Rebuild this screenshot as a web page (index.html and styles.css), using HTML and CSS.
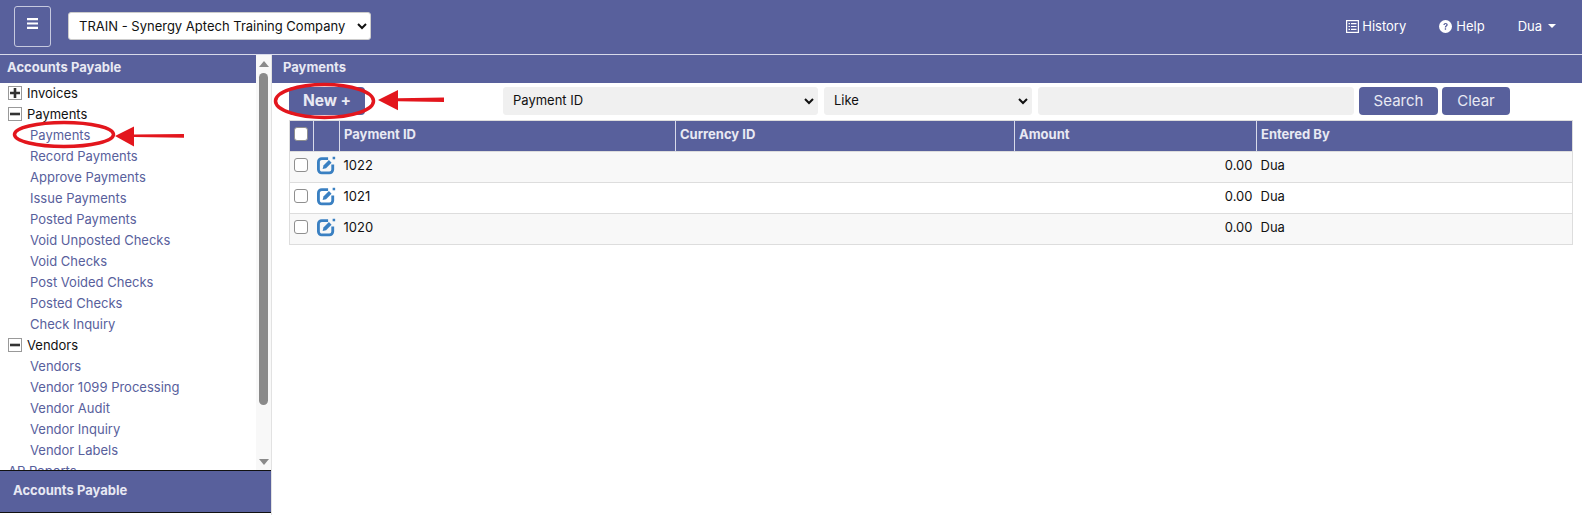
FILE: index.html
```html
<!DOCTYPE html>
<html lang="en">
<head>
<meta charset="utf-8">
<title>Payments</title>
<link rel="stylesheet" href="styles.css">
</head>
<body>
<svg class="defs" width="0" height="0" aria-hidden="true">
  <symbol id="edit-icon" viewBox="0 0 19 18">
    <path d="M11.500 2.400H5.500A3.200 3.200 0 0 0 2.300 5.600v7.200A3.200 3.200 0 0 0 5.500 16h7.200a3.200 3.200 0 0 0 3.200-3.200V8" fill="none" stroke="#3a80c2" stroke-width="2.700"/>
    <path d="M6.300 12.300l.8-3.300 5.200-5.200 2.500 2.500-5.200 5.200z" fill="#3a80c2"/>
    <path d="M15.800.7h2.400v2.400h-2.400z" fill="#3a80c2"/>
  </symbol>
</svg>
<div class="app">
  <header class="topbar">
    <button class="menu-btn" aria-label="Menu"><svg width="11" height="11" viewBox="0 0 11 11"><path d="M0 0h11v2.200H0zM0 4.400h11v2.200H0zM0 8.800h11V11H0z" fill="#fff"/></svg></button>
    <select class="company"><option>TRAIN - Synergy Aptech Training Company</option></select>
    <nav class="topnav">
      <a class="toplink"><svg width="13" height="13" viewBox="0 0 13 13"><rect x=".6" y=".6" width="11.800" height="11.800" fill="none" stroke="#fff" stroke-width="1.200"/><path d="M2.500 3h1.500v1.200H2.500zM5 3h5.500v1.200H5zM2.500 5.900h1.500v1.200H2.500zM5 5.900h5.500v1.200H5zM2.500 8.800h1.500V10H2.500zM5 8.800h5.500V10H5z" fill="#fff"/></svg>History</a>
      <a class="toplink help"><svg width="13" height="13" viewBox="0 0 13 13"><circle cx="6.500" cy="6.500" r="6.500" fill="#fff"/><path d="M4.400 5c0-1.300 1-2 2.200-2 1.200 0 2.100.7 2.100 1.800 0 1.600-1.600 1.400-1.600 2.700H5.800c0-2 1.600-1.900 1.600-2.700 0-.4-.3-.7-.8-.7-.5 0-.9.3-.9.9zM5.800 8.300h1.300v1.500H5.800z" fill="#58609c"/></svg>Help</a>
      <a class="toplink user">Dua<span class="caret"></span></a>
    </nav>
  </header>
  <div class="main">
    <aside class="sidebar">
      <div class="side-scroll">
        <div class="side-content">
          <h2 class="bar-title side-title">Accounts Payable</h2>
          <ul class="tree">
            <li class="group"><span class="toggle"><svg width="10" height="10" viewBox="0 0 10 10"><path d="M3.700 0h2.600v3.700H10v2.600H6.300V10H3.700V6.300H0V3.700h3.700z" fill="#333"/></svg></span>Invoices</li>
            <li class="group"><span class="toggle"><svg width="10" height="10" viewBox="0 0 10 10"><path d="M0 3.700h10v2.600H0z" fill="#333"/></svg></span>Payments</li>
            <li class="leaf">Payments</li>
            <li class="leaf">Record Payments</li>
            <li class="leaf">Approve Payments</li>
            <li class="leaf">Issue Payments</li>
            <li class="leaf">Posted Payments</li>
            <li class="leaf">Void Unposted Checks</li>
            <li class="leaf">Void Checks</li>
            <li class="leaf">Post Voided Checks</li>
            <li class="leaf">Posted Checks</li>
            <li class="leaf">Check Inquiry</li>
            <li class="group"><span class="toggle"><svg width="10" height="10" viewBox="0 0 10 10"><path d="M0 3.700h10v2.600H0z" fill="#333"/></svg></span>Vendors</li>
            <li class="leaf">Vendors</li>
            <li class="leaf">Vendor 1099 Processing</li>
            <li class="leaf">Vendor Audit</li>
            <li class="leaf">Vendor Inquiry</li>
            <li class="leaf">Vendor Labels</li>
            <li class="reports">AP Reports</li>
          </ul>
        </div>
        <div class="scrollbar">
          <span class="arrow up"></span>
          <span class="thumb"></span>
          <span class="arrow down"></span>
        </div>
      </div>
      <div class="side-footer">Accounts Payable</div>
    </aside>
    <section class="content">
      <h1 class="bar-title page-title">Payments</h1>
      <div class="toolbar">
        <button class="btn new-btn">New +</button>
        <div class="filters">
          <select class="field field-wide"><option>Payment ID</option></select>
          <select class="field field-mid"><option>Like</option></select>
          <input class="field field-text" type="text">
          <button class="btn search-btn">Search</button>
          <button class="btn clear-btn">Clear</button>
        </div>
      </div>
      <table class="grid">
        <colgroup><col class="c-check"><col class="c-edit"><col class="c-id"><col class="c-cur"><col class="c-amt"><col></colgroup>
        <thead>
          <tr><th class="center"><input class="head-check" type="checkbox"></th><th></th><th>Payment ID</th><th>Currency ID</th><th>Amount</th><th>Entered By</th></tr>
        </thead>
        <tbody>
          <tr class="odd"><td class="center"><input class="row-check" type="checkbox"></td><td class="center"><svg class="edit"><use href="#edit-icon"/></svg></td><td>1022</td><td></td><td class="num">0.00</td><td>Dua</td></tr>
          <tr><td class="center"><input class="row-check" type="checkbox"></td><td class="center"><svg class="edit"><use href="#edit-icon"/></svg></td><td>1021</td><td></td><td class="num">0.00</td><td>Dua</td></tr>
          <tr class="odd"><td class="center"><input class="row-check" type="checkbox"></td><td class="center"><svg class="edit"><use href="#edit-icon"/></svg></td><td>1020</td><td></td><td class="num">0.00</td><td>Dua</td></tr>
        </tbody>
      </table>
    </section>
  </div>
  <svg class="annotations" width="1582" height="515" viewBox="0 0 1582 515" aria-hidden="true">
    <g fill="none" stroke="#e3161d" stroke-width="3.500">
      <ellipse cx="324.500" cy="101" rx="49" ry="16.500"/>
      <ellipse cx="64" cy="134.500" rx="49.500" ry="12"/>
    </g>
    <g fill="#e3161d">
      <path d="M378 100l20-10v8.200l46-.7v4.400l-46-.7v9z"/>
      <path d="M115 136l19-9.500v8l50-.6v3.800l-50-.6v9.500z"/>
    </g>
  </svg>
</div>
</body>
</html>
```
FILE: styles.css
```css
* { box-sizing: border-box; }
html, body { margin: 0; height: 100%; background: #fff; }
body { font-family: "Inter", "Liberation Sans", sans-serif; font-size: 13px; color: #111; overflow: hidden; }
.defs { position: absolute; }
.app { position: relative; width: 1582px; height: 515px; display: flex; flex-direction: column; }

.topbar { height: 55px; flex: none; background: #58609c; border-bottom: 1px solid #d8daea; display: flex; align-items: center; padding: 0 26px 2px 14px; }
.menu-btn { width: 37px; height: 41px; background: #58609c; border: 1px solid #c6c9df; border-radius: 3px; padding: 0 0 6px; display: flex; align-items: center; justify-content: center; }
.company { width: 303px; height: 28px; margin-left: 17px; border: 1px solid #ccc; border-radius: 3px; background: #fff; color: #111; font: 13px "Inter", sans-serif; padding: 0 4px 0 6px; }
.topnav { margin-left: auto; display: flex; align-items: center; color: #fff; }
.toplink { display: flex; align-items: center; gap: 3px; font-size: 13px; }
.toplink.help { margin-left: 33px; gap: 4px; }
.toplink.user { margin-left: 33px; gap: 6px; }
.caret { width: 0; height: 0; border-left: 4px solid transparent; border-right: 4px solid transparent; border-top: 4px solid #fff; }

.main { flex: 1; min-height: 0; display: flex; }
.sidebar { width: 272px; flex: none; display: flex; flex-direction: column; border-right: 1px solid #e2e2e2; }
.side-scroll { flex: 1; min-height: 0; display: flex; overflow: hidden; }
.side-content { flex: 1; min-width: 0; }
.bar-title { margin: 0; height: 28px; background: #58609c; color: #e8e9f3; font-size: 13px; font-weight: 700; line-height: 24px; }
.side-title { padding-left: 7px; }
.tree { list-style: none; margin: -0.5px 0 0; padding: 0 0 0 8px; font-size: 13px; }
.tree li { height: 21px; line-height: 21px; white-space: nowrap; }
.group { display: flex; align-items: center; gap: 5px; color: #111; }
.toggle { width: 14px; height: 14px; border: 1px solid #999; background: #fff; display: flex; align-items: center; justify-content: center; flex: none; }
.leaf { color: #58609c; padding-left: 22px; }
.reports { color: #58609c; }
.scrollbar { width: 15px; flex: none; background: #f8f8f8; display: flex; flex-direction: column; align-items: center; padding: 6px 0 5px; }
.arrow { width: 0; height: 0; border-left: 5px solid transparent; border-right: 5px solid transparent; flex: none; }
.arrow.up { border-bottom: 6px solid #8a8a8a; }
.arrow.down { border-top: 6px solid #8a8a8a; margin-top: auto; }
.thumb { width: 9px; height: 332px; margin-top: 6px; border-radius: 5px; background: #8a8a8a; }
.side-footer { height: 43px; flex: none; background: #58609c; border-top: 1px solid #111; border-bottom: 1px solid #111; color: #e8e9f3; font-size: 13px; font-weight: 700; padding: 11px 0 0 13px; margin-bottom: 2px; }

.content { flex: 1; min-width: 0; }
.page-title { padding-left: 11px; }
.toolbar { display: flex; align-items: center; height: 37px; padding: 0 0 1px 17px; }
.btn { height: 28px; border: 0; border-radius: 4px; background: #58609c; color: #e8e9f3; font: 15px "Inter", sans-serif; padding: 0 0 2px; }
.new-btn { width: 76px; font-weight: 700; font-size: 15.500px; }
.filters { display: flex; align-items: center; gap: 6px; margin-left: 138px; }
.field { height: 28px; border: 1px solid #f0f0f0; border-radius: 3px; background: #f0f0f0; font: 13px "Inter", sans-serif; color: #111; padding-bottom: 2px; }
.field-wide { width: 315px; padding-left: 5px; }
.field-mid { width: 208px; padding-left: 5px; }
.field-text { width: 316px; }
.search-btn { width: 79px; margin-left: -1px; }
.clear-btn { width: 68px; margin-left: -2px; }

.grid { width: 1284px; margin-left: 17px; border-collapse: collapse; table-layout: fixed; font-size: 13px; border: 1px solid #ddd; }
.c-check { width: 24px; } .c-edit { width: 26px; } .c-id { width: 336px; } .c-cur { width: 339px; } .c-amt { width: 242px; }
.grid th { height: 31px; background: #58609c; color: #e8e9f3; font-weight: 700; text-align: left; padding: 0 4px 5px; border-left: 1px solid #d8daea; }
.grid th:first-child { border-left: 0; }
.grid td { height: 31px; padding: 0 4px 5px; border-top: 1px solid #ddd; }
.odd td { background: #f8f8f8; }
.center { text-align: center; }
.grid th.center { padding: 0 1px 4px 0; }
.grid td.center { padding: 0 1px 4px 0; }
.num { text-align: right; }
.head-check, .row-check { width: 14px; height: 14px; appearance: none; border: 1.500px solid #8f8f8f; border-radius: 3px; background: #fff; display: block; margin: 0 auto; }
.edit { width: 20px; height: 19px; display: block; margin: 0 auto; }

.annotations { position: absolute; left: 0; top: 0; pointer-events: none; }
```
